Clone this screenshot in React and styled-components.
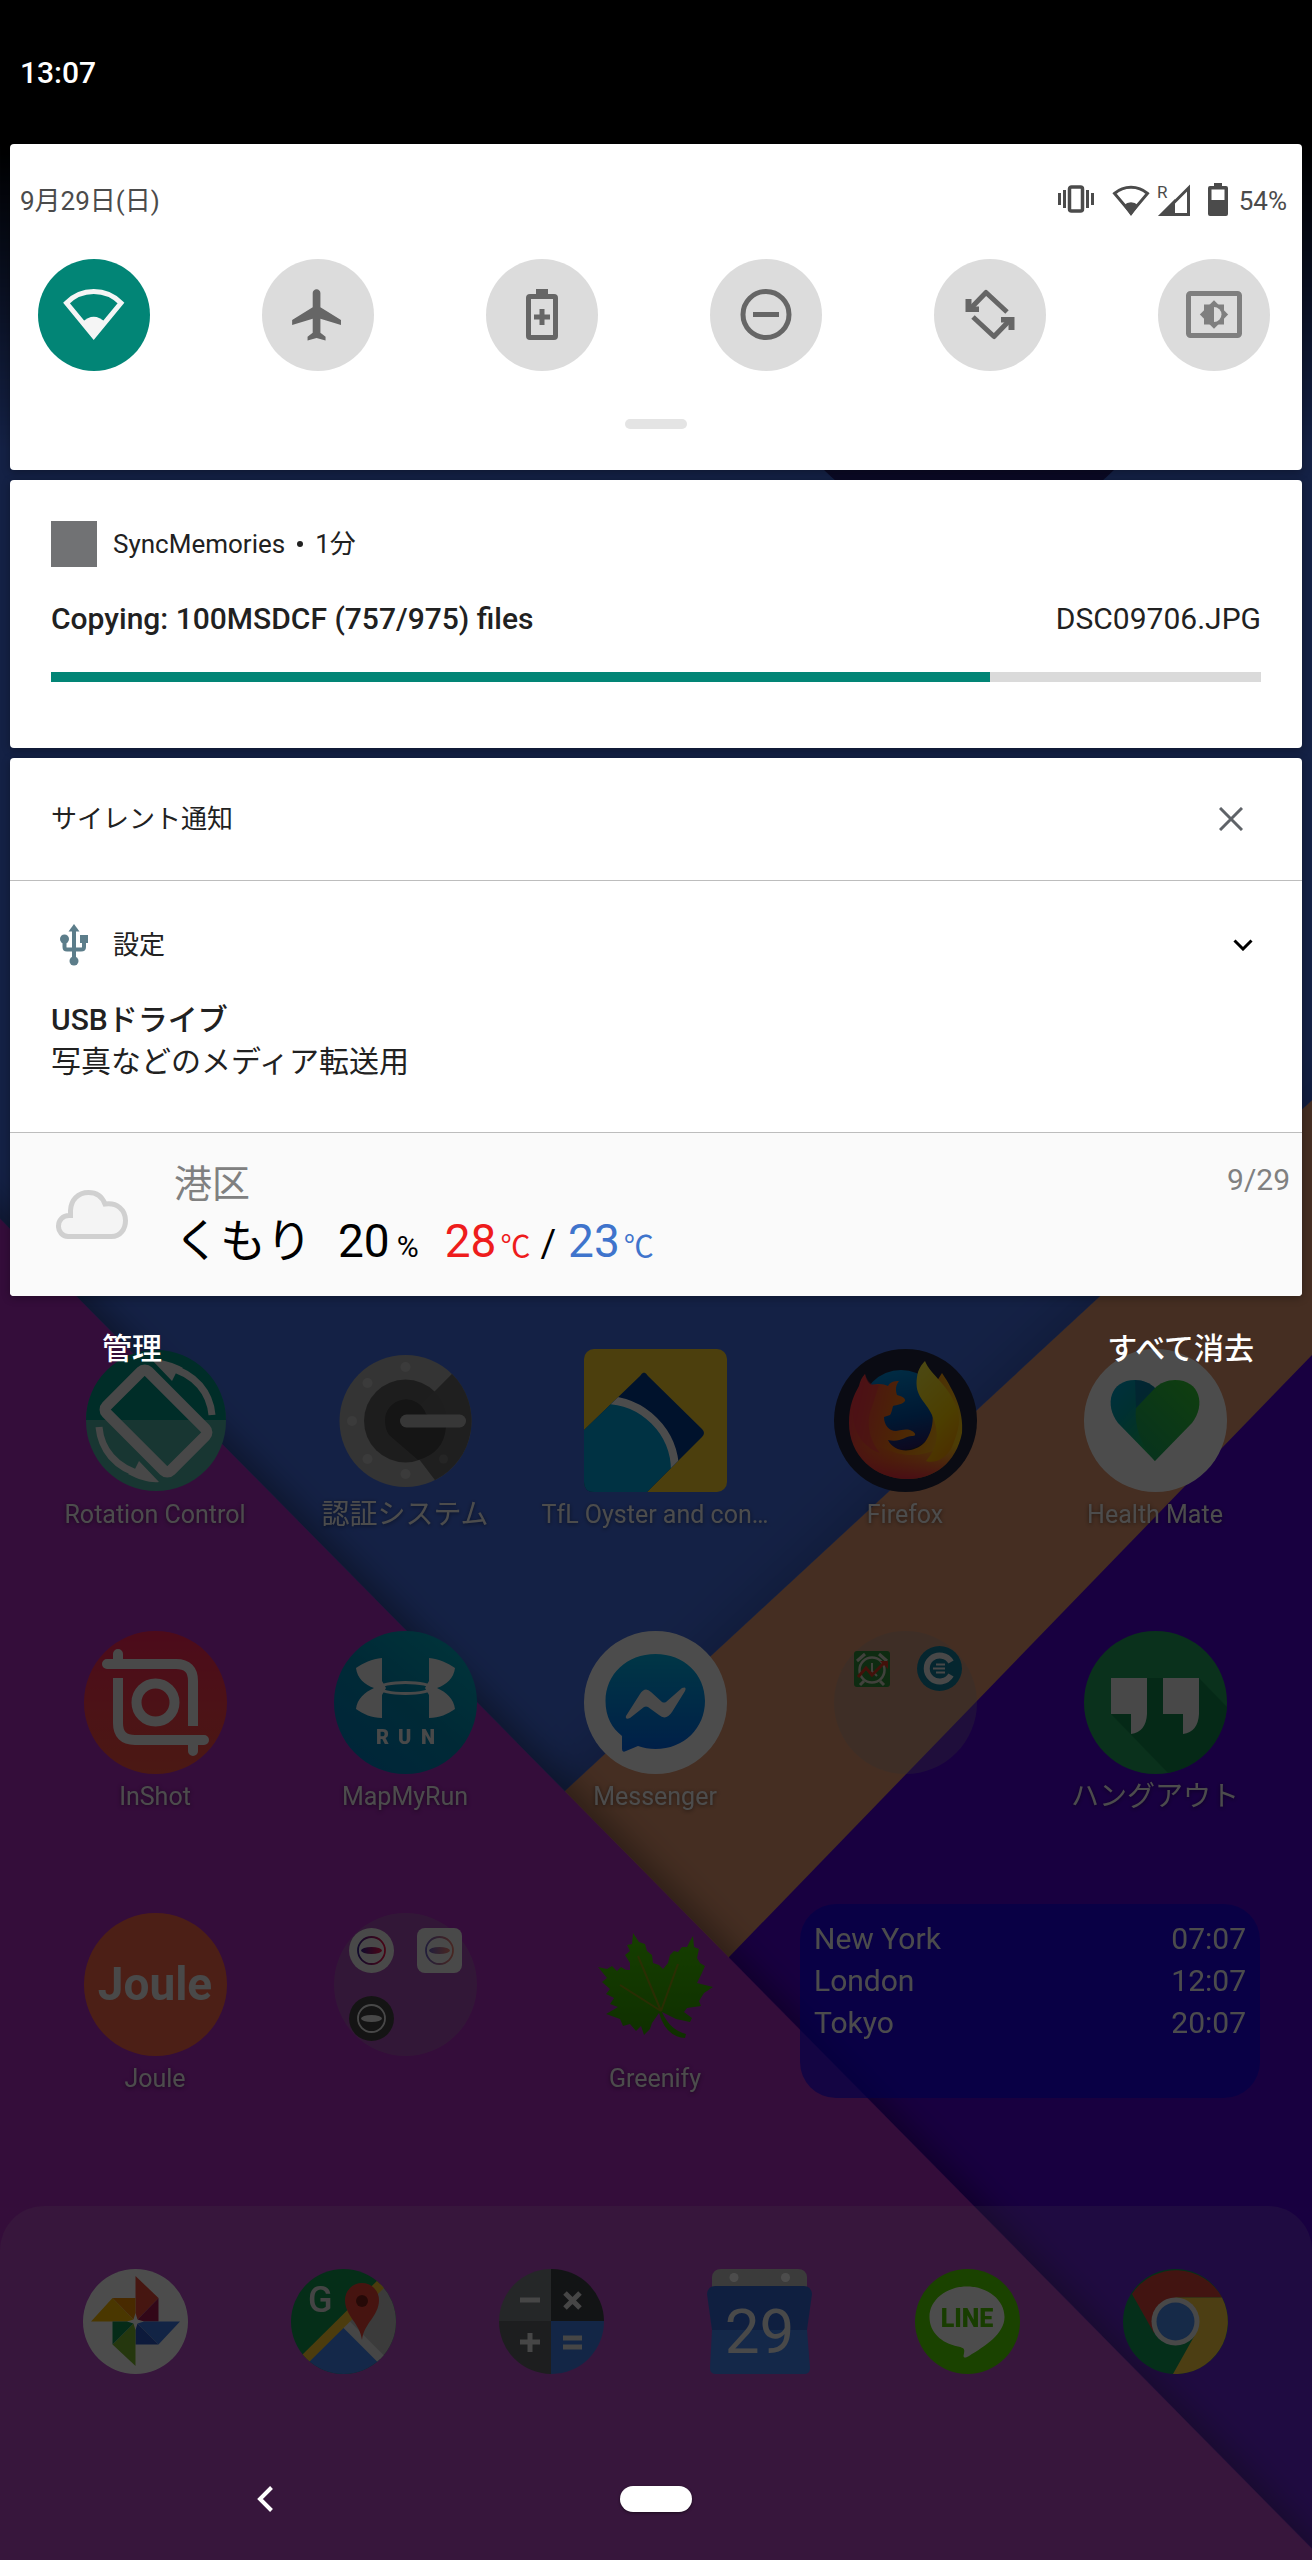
import React from "react";
import styled, { createGlobalStyle } from "styled-components";

const GlobalStyle = createGlobalStyle`
  *, *::before, *::after { box-sizing: border-box; }
  html, body { margin: 0; background: #000; }
  body, button, progress {
    font-family: Roboto, "Noto Sans CJK JP", sans-serif;
  }
  button { margin: 0; padding: 0; border: 0; background: none; cursor: pointer; }
  svg { display: block; flex: none; }
`;

/* ---------- layers ---------- */

const Screen = styled.div`
  display: grid;
  grid-template-columns: minmax(0, 1fr);
  grid-template-rows: 1fr;
  min-height: 100vh;
`;

const Home = styled.main`
  grid-area: 1 / 1;
  position: relative;
  display: flex;
  flex-direction: column;
  justify-content: flex-end;
  overflow: hidden;
  filter: brightness(0.3);
`;

const WallpaperSvg = styled.svg`
  position: absolute;
  inset: 0;
  width: 100%;
  height: 100%;
`;

const Shade = styled.section`
  grid-area: 1 / 1;
  align-self: start;
  position: relative;
  display: flex;
  flex-direction: column;
`;

const NavBar = styled.nav`
  grid-area: 1 / 1;
  align-self: end;
  position: relative;
  display: grid;
  grid-template-columns: 1fr 72px 1fr;
  align-items: center;
  height: 122px;
`;

/* ---------- shade ---------- */

const StatusBar = styled.header`
  display: flex;
  align-items: center;
  height: 144px;
  padding: 0 20px;
  background: #000;
  color: #fff;
  font-size: 30px;
  font-weight: 500;
`;

const Stack = styled.div`
  display: flex;
  flex-direction: column;
  gap: 10px;
  padding: 0 10px;
`;

const Card = styled.article`
  overflow: hidden;
  border-radius: 4px;
  background: #fff;
  color: #212121;
  box-shadow: 0 2px 8px rgba(0, 0, 0, 0.3);
`;

const QuickSettings = styled(Card)`
  display: flex;
  flex-direction: column;
  padding: 39px 0 41px;
`;

const InfoRow = styled.div`
  display: flex;
  align-items: center;
  justify-content: space-between;
  height: 36px;
  padding: 0 15px 0 10px;
  color: #4b4b4b;
  font-size: 26px;
  line-height: 36px;
`;

const Cluster = styled.div`
  display: flex;
  align-items: center;
  gap: ${(p) => p.$gap}px;
`;

const Tiles = styled.div`
  display: flex;
  justify-content: space-between;
  margin-top: 40px;
  padding: 0 32px 0 28px;
`;

const Tile = styled.button`
  width: 112px;
  height: 112px;
  border-radius: 50%;
  background: ${(p) => (p.$on ? "#028576" : "#dcdcdc")};
  color: ${(p) => (p.$on ? "#f5f5f5" : p.$dim ? "#7f7f7f" : "#666")};
`;

const Handle = styled.div`
  align-self: center;
  width: 62px;
  height: 10px;
  margin-top: 48px;
  border-radius: 5px;
  background: #e4e4e4;
`;

const SyncCard = styled(Card)`
  padding: 41px 41px 66px;
`;

const NoteHeader = styled.div`
  display: flex;
  align-items: center;
  height: 46px;
  font-size: 26px;
  line-height: 36px;
`;

const AppMark = styled.div`
  display: flex;
  align-items: center;
  justify-content: center;
  width: 46px;
  height: 46px;
  margin-right: 16px;
  background: ${(p) => p.$fill || "transparent"};
`;

const Dot = styled.span`
  width: 6px;
  height: 6px;
  margin: 0 12px;
  border-radius: 50%;
  background: #212121;
`;

const TitleRow = styled.div`
  display: flex;
  justify-content: space-between;
  margin-top: 34px;
  font-size: 30px;
  line-height: 36px;
`;

const Title = styled.span`
  font-weight: 500;
`;

const Progress = styled.progress`
  display: block;
  appearance: none;
  width: 100%;
  height: 10px;
  margin-top: 35px;
  border: 0;
  background: #dadada;

  &::-webkit-progress-bar { background: #dadada; }
  &::-webkit-progress-value { background: #028576; }
  &::-moz-progress-bar { background: #028576; }
`;

const SilentHeader = styled.header`
  display: flex;
  align-items: center;
  justify-content: space-between;
  height: 122px;
  padding: 0 47px 0 41px;
  font-size: 26px;
`;

const Heading = styled.h2`
  margin: 0;
  font-size: 26px;
  font-weight: 400;
  line-height: 36px;
`;

const IconButton = styled.button`
  display: flex;
  align-items: center;
  justify-content: center;
  width: 48px;
  height: 48px;
  margin-left: auto;
`;

const Note = styled.section`
  padding: 41px 35px 49px 41px;
  border-top: 1px solid #bdbdbd;
`;

const NoteBody = styled.div`
  margin-top: 31px;
  font-size: 30px;
  line-height: 42px;
`;

const Weather = styled.section`
  display: flex;
  align-items: center;
  height: 164px;
  padding: 0 12px 0 46px;
  border-top: 1px solid #bdbdbd;
  background: #fafafa;
`;

const WeatherText = styled.div`
  flex: 1;
  margin-left: 46px;
  padding-top: 4px;
  color: #000;
`;

const Place = styled.div`
  color: #808080;
  font-size: 38px;
  line-height: 54px;
`;

const Forecast = styled.div`
  display: flex;
  align-items: baseline;
  font-size: 46px;
  line-height: 60px;
`;

const Reading = styled.span`
  margin-left: ${(p) => p.$gap}px;
  color: ${(p) => p.$color || "#000"};
`;

const Unit = styled.span`
  margin-left: ${(p) => p.$gap}px;
  color: ${(p) => p.$color || "#000"};
  font-size: 30px;
`;

const Slash = styled.span`
  margin-left: 10px;
  font-size: 38px;
`;

const WeatherDate = styled.time`
  align-self: flex-start;
  margin-top: 27px;
  color: #808080;
  font-size: 30px;
  line-height: 40px;
`;

const Actions = styled.div`
  display: flex;
  justify-content: space-between;
  margin-top: 33px;
  padding: 0 58px 0 102px;
`;

const TextButton = styled.button`
  color: #fff;
  font-size: 30px;
  font-weight: 500;
  line-height: 40px;
`;

/* ---------- home ---------- */

const Apps = styled.div`
  position: relative;
  display: grid;
  grid-template-columns: repeat(5, minmax(0, 1fr));
  grid-auto-rows: 282px;
  margin-bottom: 11px;
  padding: 0 32px 0 30px;
`;

const AppButton = styled.button`
  display: flex;
  flex-direction: column;
  align-items: center;
  color: #fff;
`;

const AppLabel = styled.span`
  margin-top: 6px;
  font-size: ${(p) => (p.$cjk ? 28 : 25)}px;
  line-height: 34px;
  white-space: nowrap;
  text-shadow: 0 1px 4px rgba(0, 0, 0, 0.5);
`;

const ClockWidget = styled.div`
  grid-column: span 2;
  height: 194px;
  margin: -9px 20px 0;
  padding: 14px;
  border-radius: 36px;
  background: rgba(0, 0, 240, 0.62);
  color: #fff;
  font-size: 30px;
  line-height: 42px;
`;

const ClockRow = styled.div`
  display: flex;
  justify-content: space-between;
`;

const Dock = styled.div`
  position: relative;
  display: flex;
  justify-content: space-between;
  height: 354px;
  padding: 63px 84px 0 83px;
  border-radius: 44px 44px 0 0;
  background: rgba(233, 233, 233, 0.16);
`;

const DockButton = styled.button`
  width: 105px;
  height: 105px;
`;

const BackButton = styled.button`
  display: flex;
  align-items: center;
  justify-content: center;
  width: 96px;
  height: 96px;
  margin-left: 217px;
`;

const HomeButton = styled.button`
  height: 26px;
  border-radius: 13px;
  background: #fff;
  box-shadow: 0 1px 3px rgba(0, 0, 0, 0.5);
`;

/* ---------- wallpaper ---------- */

function Wallpaper() {
  return (
    <WallpaperSvg viewBox="0 0 1312 2560" preserveAspectRatio="xMidYMid slice" aria-hidden="true">
      <defs>
        <filter id="sheet" x="-10%" y="-10%" width="120%" height="120%">
          <feDropShadow dx="8" dy="-4" stdDeviation="16" floodColor="#000" floodOpacity="0.38" />
        </filter>
        <filter id="band" x="-10%" y="-10%" width="120%" height="120%">
          <feDropShadow dx="-10" dy="-6" stdDeviation="26" floodColor="#000" floodOpacity="0.18" />
        </filter>
        <linearGradient id="topFade" x1="0" y1="0" x2="0" y2="1">
          <stop offset="0.32" stopColor="#000" />
          <stop offset="1" stopColor="#000" stopOpacity="0" />
        </linearGradient>
      </defs>
      <rect width="1312" height="2560" fill="#436ee6" />
      <circle cx="969" cy="325" r="205" fill="#25227c" />
      <polygon points="1400,1019 565,1791 640,2100 1400,2100" fill="#e69971" filter="url(#band)" />
      <polygon points="1400,1264 729,1957 729,2700 1400,2700" fill="#5000d5" />
      <polygon points="-60,1158 1400,2638 1400,2800 -60,2800" fill="#ad2bc1" filter="url(#sheet)" />
      <rect width="1312" height="450" fill="url(#topFade)" />
    </WallpaperSvg>
  );
}

/* ---------- quick setting icons ---------- */

const TileSvg = ({ children }) => (
  <svg width="112" height="112" viewBox="0 0 112 112" fill="none" stroke="currentColor" strokeWidth="5" aria-hidden="true">
    {children}
  </svg>
);

const RotateHalf = () => (
  <>
    <path d="M73 53 52 33.500 37 49" strokeLinejoin="round" />
    <path d="M31.500 40h6v7.500h7.500v5.500H31.500z" fill="currentColor" stroke="none" />
  </>
);

const tiles = [
  {
    name: "Wi-Fi",
    on: true,
    art: (
      <>
        <path d="M28.500 44A38 38 0 0 1 83 44L55.700 77Z" />
        <path d="M55.700 80 44 63.500Q55.700 52 67.500 63.500Z" fill="currentColor" stroke="none" />
      </>
    ),
  },
  {
    name: "機内モード",
    art: (
      <path
        transform="translate(25 25) scale(2.570)"
        d="M21 16v-2l-8-5V3.500c0-.83-.67-1.500-1.500-1.500S10 2.670 10 3.500V9l-8 5v2l8-2.500V19l-2 1.500V22l3.500-1 3.500 1v-1.500L13 19v-5.500l8 2.500z"
        fill="currentColor"
        stroke="none"
      />
    ),
  },
  {
    name: "バッテリー セーバー",
    art: (
      <>
        <rect x="42.500" y="37.500" width="27" height="41" rx="1.500" />
        <path d="M50 30h12v6H50z" fill="currentColor" stroke="none" />
        <path d="M56 50v16M48 58h16" />
      </>
    ),
  },
  {
    name: "サイレント モード",
    art: (
      <>
        <circle cx="56" cy="55.500" r="23" />
        <path d="M43 55.500h26" />
      </>
    ),
  },
  {
    name: "自動回転",
    art: (
      <>
        <RotateHalf />
        <g transform="rotate(180 56 55.500)">
          <RotateHalf />
        </g>
      </>
    ),
  },
  {
    name: "アンビエント表示",
    dim: true,
    art: (
      <>
        <rect x="30.500" y="34.500" width="51" height="42" rx="2" />
        <g fill="currentColor" stroke="none">
          <rect x="46" y="45.500" width="20" height="20" />
          <rect x="46" y="45.500" width="20" height="20" transform="rotate(45 56 55.500)" />
        </g>
        <path d="M56 48a7.500 7.500 0 0 1 0 15z" fill="#dcdcdc" stroke="none" />
      </>
    ),
  },
];

/* ---------- status icons ---------- */

const VibrateIcon = () => (
  <svg width="36" height="32" viewBox="0 0 36 32" fill="none" stroke="#4b4b4b" aria-label="バイブ">
    <rect x="11.500" y="2" width="13" height="24" rx="2" strokeWidth="3.500" />
    <path d="M1.500 8v12M6.500 5v18M29.500 5v18M34.500 8v12" strokeWidth="3" />
  </svg>
);

const WifiIcon = () => (
  <svg width="38" height="34" viewBox="0 0 38 34" aria-label="Wi-Fi">
    <path d="M2.500 9.500A25 25 0 0 1 35.500 9.500L19 29Z" fill="none" stroke="#4b4b4b" strokeWidth="3" />
    <path d="M19 32 11.500 21.500Q19 15 26.500 21.500Z" fill="#4b4b4b" />
  </svg>
);

const SignalIcon = () => (
  <svg width="33" height="36" viewBox="0 0 33 36" aria-label="モバイル">
    <text x="0" y="15" fontSize="17" fill="#4b4b4b">R</text>
    <path d="M5 31.500 31.500 5V31.500Z" fill="none" stroke="#4b4b4b" strokeWidth="3" />
    <path d="M1 33 18 16V33Z" fill="#4b4b4b" />
  </svg>
);

const BatteryIcon = () => (
  <svg width="20" height="36" viewBox="0 0 20 36" aria-label="電池">
    <path d="M6 0h8v3h4a2 2 0 0 1 2 2v26a2 2 0 0 1-2 2H2a2 2 0 0 1-2-2V5a2 2 0 0 1 2-2h4z" fill="#4b4b4b" />
    <rect x="3.500" y="6.500" width="13" height="10.500" fill="#fff" />
  </svg>
);

const UsbIcon = () => (
  <svg width="28" height="42" viewBox="0 0 28 42" fill="#5c7d8a" aria-hidden="true">
    <path d="M14 0l5.500 7.500H8.500z" />
    <circle cx="4.500" cy="15" r="4.500" />
    <rect x="20" y="11" width="8" height="8" />
    <circle cx="14" cy="37" r="4.500" />
    <path d="M14 6v30M4.500 16v7q0 2.500 2.500 2.500h14q3 0 3-2.500v-6" fill="none" stroke="#5c7d8a" strokeWidth="4" />
  </svg>
);

const CloudIcon = () => (
  <svg width="72" height="49" viewBox="0 0 72 49" aria-hidden="true">
    <path
      d="M12 46.500a10 10 0 0 1-9.500-10.500c0-6 4.500-10.500 10.500-10.500h1.500v-5C15 10 22 2.500 32.500 2.500c8.500 0 14 5 16.500 11.500 12-2 20.500 6 20.500 16.500 0 8.500-5 16-14 16z"
      fill="#f4f4f4"
      stroke="#d0d0d0"
      strokeWidth="5"
    />
  </svg>
);

/* ---------- launcher icons ---------- */

const AppSvg = ({ children }) => (
  <svg width="143" height="143" viewBox="0 0 143 143" aria-hidden="true">
    {children}
  </svg>
);

const ArrowArc = () => (
  <>
    <path d="M84 18C112 25 126 44 128 66" fill="none" stroke="#f0f0f0" strokeWidth="7" />
    <path d="M68 11C76 10 88 13 99 19L92 24 88 32Z" fill="#f0f0f0" />
  </>
);

const RotationControl = () => (
  <AppSvg>
    <circle cx="72" cy="72" r="70" fill="#4fb3a5" />
    <path d="M2 71a70 70 0 0 1 140 0z" fill="#009684" />
    <ArrowArc />
    <g transform="rotate(180 71.500 72)">
      <ArrowArc />
    </g>
    <g transform="translate(72 72) rotate(45)">
      <rect x="-45.500" y="-29.500" width="91" height="59" rx="5" fill="none" stroke="#f0f0f0" strokeWidth="11" />
    </g>
  </AppSvg>
);

const Authenticator = () => (
  <AppSvg>
    <circle cx="71.500" cy="72" r="66" fill="#adadad" />
    <path d="M118 25A66 66 0 0 1 101 131L71.500 92V72Z" fill="#686868" />
    <circle cx="71.500" cy="72" r="41.500" fill="#626262" />
    <path d="M118 25 101 42 71 72V92L101 131A66 66 0 0 0 137 72 66 66 0 0 0 118 25Z" fill="#686868" opacity=".55" />
    <path d="M51 72a21 21 0 0 1 41-7L112 78Q110 104 84 111L55 86Q51 80 51 72Z" fill="#454545" />
    <g fill="#c4c4c4">
      <circle cx="71.500" cy="18" r="5" />
      <circle cx="33.500" cy="34" r="5" />
      <circle cx="18" cy="72" r="5" />
      <circle cx="33.500" cy="110" r="5" />
      <circle cx="71.500" cy="125" r="5" />
    </g>
    <circle cx="109.500" cy="110" r="4.500" fill="#7c7c7c" />
    <rect x="66" y="65.500" width="66" height="13" rx="6.500" fill="#b8b8b8" />
  </AppSvg>
);

const Oyster = () => (
  <AppSvg>
    <defs>
      <clipPath id="oysterCard">
        <path d="M56 27Q60 20 64 27L118 80Q122 84 118 88L63 143H10Q0 143 0 133V81Z" />
      </clipPath>
    </defs>
    <rect width="143" height="143" rx="10" fill="#fdd22b" />
    <g clipPath="url(#oysterCard)">
      <rect width="143" height="143" fill="#003c93" />
      <circle cx="20" cy="122" r="71" fill="#00a7df" stroke="#fff" strokeWidth="8" />
    </g>
  </AppSvg>
);

const Firefox = () => (
  <AppSvg>
    <defs>
      <linearGradient id="ffGlobe" x1=".4" y1="0" x2=".6" y2="1">
        <stop offset="0" stopColor="#0090e0" />
        <stop offset=".6" stopColor="#0050a8" />
        <stop offset="1" stopColor="#2b1a66" />
      </linearGradient>
      <linearGradient id="ffBody" x1="0" y1=".3" x2="1" y2=".5">
        <stop offset="0" stopColor="#ff3647" />
        <stop offset=".45" stopColor="#ff7a12" />
        <stop offset="1" stopColor="#ffcc10" />
      </linearGradient>
      <linearGradient id="ffFoot" x1="0" y1=".4" x2="0" y2="1">
        <stop offset="0" stopColor="#ff2a50" stopOpacity="0" />
        <stop offset="1" stopColor="#f01550" stopOpacity=".8" />
      </linearGradient>
      <linearGradient id="ffTail" x1=".3" y1="0" x2=".7" y2="1">
        <stop offset="0" stopColor="#fff03a" />
        <stop offset=".6" stopColor="#ffcf00" />
        <stop offset="1" stopColor="#ff9a00" />
      </linearGradient>
    </defs>
    <circle cx="71.500" cy="71.500" r="71.500" fill="#21253e" />
    <circle cx="67" cy="61" r="40" fill="url(#ffGlobe)" />
    <path
      d="M31 25C32 31 35 35 38 36C45 34 50 35 54 37C56 33 60 32 65 32C62 36 61 40 63 46C67 47 72 49 71 52C69 55 63 56 59 57C58 61 57 65 56 66L50 68C50 76 55 82 62 82C68 81 73 79 78 82C82 84 82 87 79 87C72 86 67 94 54 91C60 104 80 105 91 93C102 78 100 60 93 48L108 24C120 42 130 62 128 84C122 114 100 130 74 130C40 130 15 106 15 74C15 56 20 46 25 37C26 32 28 28 31 25Z"
      fill="url(#ffBody)"
    />
    <path
      d="M15 74C15 106 40 130 74 130C100 130 122 114 128 84C110 100 85 112 60 103C40 96 22 90 15 74Z"
      fill="url(#ffFoot)"
    />
    <path d="M91 12C96 26 116 36 124 62C127 75 123 85 118 98C112 110 100 115 92 112C104 98 106 84 98 66C92 52 80 48 83 28C84 20 88 15 91 12Z" fill="url(#ffTail)" />
    <path d="M31 25C34 34 38 36 45 36L38 58C32 70 34 90 46 104C28 98 16 80 20 56C21 42 28 32 31 25Z" fill="#ff2f4e" opacity=".45" />
  </AppSvg>
);

const HealthMate = () => (
  <AppSvg>
    <defs>
      <linearGradient id="heartLeft" x1="0" y1="0" x2=".6" y2="1">
        <stop offset="0" stopColor="#009fd0" />
        <stop offset=".45" stopColor="#00a0a4" />
        <stop offset="1" stopColor="#18b858" />
      </linearGradient>
      <linearGradient id="heartRight" x1="1" y1="0" x2=".2" y2="1">
        <stop offset="0" stopColor="#36d030" />
        <stop offset="1" stopColor="#18a860" />
      </linearGradient>
    </defs>
    <circle cx="71.500" cy="71.500" r="71.500" fill="#fff" />
    <path d="M71 112 34 74C20 56 26 31 51 31C59 31 66 34 71 39Z" fill="url(#heartLeft)" />
    <path d="M71 112 108 74C122 56 116 31 91 31C83 31 76 34 71 39L52 59C50 75 56 96 71 112Z" fill="url(#heartRight)" />
    <path d="M51 31C59 31 66 34 71 39L52 59Z" fill="#0a5f9c" opacity=".5" />
  </AppSvg>
);

const InShot = () => (
  <AppSvg>
    <defs>
      <linearGradient id="inshot" x1="0" y1="0" x2="0" y2="1">
        <stop offset="0" stopColor="#ff2358" />
        <stop offset="1" stopColor="#fa5340" />
      </linearGradient>
    </defs>
    <circle cx="71.500" cy="71.500" r="71.500" fill="url(#inshot)" />
    <g fill="none" stroke="#f4f4f4" strokeWidth="10">
      <path d="M23 33H92Q109 33 109 50V95M34 47V92Q34 109 51 109H120" />
      <path d="M34 33V23M109 109V120M23 33h4M116 109h4" strokeLinecap="round" />
      <circle cx="71.500" cy="71.500" r="19" />
    </g>
  </AppSvg>
);

const ArmourSide = () => (
  <path d="M48 27C38 28 29 32 22 37C23 47 31 54 40 57C31 61 23 68 22 78C29 83 38 87 48 87V64L52 57 48 50Z" />
);

const MapMyRun = () => (
  <AppSvg>
    <defs>
      <linearGradient id="mmr" x1=".1" y1="1" x2=".9" y2="0">
        <stop offset="0" stopColor="#007cc0" />
        <stop offset=".5" stopColor="#008ab4" />
        <stop offset="1" stopColor="#00b0c4" />
      </linearGradient>
    </defs>
    <circle cx="71.500" cy="71.500" r="71.500" fill="url(#mmr)" />
    <g fill="#f4f4f4">
      <ArmourSide />
      <g transform="translate(143 0) scale(-1 1)">
        <ArmourSide />
      </g>
      <ellipse cx="71.500" cy="57" rx="26" ry="5.500" fill="none" stroke="#f4f4f4" strokeWidth="3" />
      <text x="42 64 87" y="113" fontSize="20" fontWeight="900">RUN</text>
    </g>
  </AppSvg>
);

const Messenger = () => (
  <AppSvg>
    <defs>
      <linearGradient id="msgr" x1="0" y1="0" x2="0" y2="1">
        <stop offset="0" stopColor="#00b4e8" />
        <stop offset="1" stopColor="#0068f0" />
      </linearGradient>
    </defs>
    <circle cx="71.500" cy="71.500" r="71.500" fill="#fff" />
    <path d="M71.500 23C43 23 21.500 43 21.500 70C21.500 86 28 97 38 105V118Q38 122 42 120L54 115Q62 118 71.500 118C100 118 121 97 121 70C121 43 100 23 71.500 23Z" fill="url(#msgr)" />
    <path d="M42 85 56 63Q61 55 67 61L78 71Q80 72 82 71L98 57Q103 55 101 60L88 81Q82 90 75 84L64 76Q62 75 60 76L46 87Q41 89 42 85Z" fill="#f4f4f4" />
  </AppSvg>
);

const FolderOne = () => (
  <AppSvg>
    <circle cx="71.500" cy="71.500" r="71.500" fill="rgba(160,160,160,.3)" />
    <rect x="20" y="20" width="36" height="36" rx="3" fill="#2f8f38" />
    <circle cx="38" cy="39" r="12.500" fill="none" stroke="#d8d8c8" strokeWidth="2.500" />
    <path d="M23 30l8-7M53 30l-8-7M30 50l-4 4M46 50l4 4" stroke="#d8d8c8" strokeWidth="3" />
    <path d="M38 32v8l5 5" fill="none" stroke="#d8d8c8" strokeWidth="2" />
    <path d="M24 46l8-9 6 7 13-13" fill="none" stroke="#e03a20" strokeWidth="3" />
    <path d="M46 30h8v8z" fill="#e03a20" />
    <circle cx="105.500" cy="37.500" r="22.500" fill="#127f9c" />
    <path d="M117 31a13 13 0 1 0 0 13" fill="none" stroke="#f0f0f0" strokeWidth="6" />
    <path d="M102 33.500h9M99 37.500h12M102 41.500h9" stroke="#f0f0f0" strokeWidth="2" />
  </AppSvg>
);

const Quote = () => <path d="M27 47H63V83Q62 101 47 103V83H27Z" />;

const Hangouts = () => (
  <AppSvg>
    <circle cx="71.500" cy="71.500" r="71.500" fill="#20a25c" />
    <path d="M27 83 84 142A71.500 71.500 0 0 0 143 76L115 47 63 47Z" fill="#0a7a44" opacity=".6" />
    <g fill="#f0f0f0">
      <Quote />
      <g transform="translate(52 0)">
        <Quote />
      </g>
    </g>
  </AppSvg>
);

const Joule = () => (
  <AppSvg>
    <circle cx="71.500" cy="71.500" r="71.500" fill="#ff6648" />
    <text x="71" y="87" textAnchor="middle" fontSize="46" fontWeight="700" fill="#f2f2f2">Joule</text>
  </AppSvg>
);

const Eye = ({ x, y, ring, fill }) => (
  <g transform={`translate(${x} ${y})`}>
    <circle r="13.500" fill="none" stroke={ring} strokeWidth="1.800" />
    <ellipse rx="10.500" ry="3.500" fill={fill} />
  </g>
);

const FolderTwo = () => (
  <AppSvg>
    <defs>
      <linearGradient id="eyeVivid">
        <stop offset="0" stopColor="#3a2090" />
        <stop offset="1" stopColor="#f01048" />
      </linearGradient>
      <linearGradient id="eyePale">
        <stop offset="0" stopColor="#7060c0" />
        <stop offset="1" stopColor="#f08070" />
      </linearGradient>
    </defs>
    <circle cx="71.500" cy="71.500" r="71.500" fill="rgba(160,160,160,.3)" />
    <circle cx="37.500" cy="37.500" r="22.500" fill="#f4f4f4" />
    <Eye x="37.500" y="37.500" ring="url(#eyeVivid)" fill="url(#eyeVivid)" />
    <rect x="83" y="15" width="45" height="45" rx="8" fill="#f4f4f4" />
    <Eye x="105.500" y="37.500" ring="url(#eyePale)" fill="url(#eyePale)" />
    <circle cx="37.500" cy="105.500" r="22.500" fill="#444" />
    <Eye x="37.500" y="105.500" ring="#f0f0f0" fill="#f0f0f0" />
  </AppSvg>
);

const Greenify = () => (
  <AppSvg>
    <defs>
      <linearGradient id="leaf" x1="0" y1="0" x2="0" y2="1">
        <stop offset="0" stopColor="#48d000" />
        <stop offset="1" stopColor="#309c00" />
      </linearGradient>
    </defs>
    <path
      d="M49 20 55 29 61 31 63 38 68 42 69 50 75 52 79 56 84 50 86 42 90 38 94 39 98 34 103 34 106 28 109 23 110 34 115 36 113 45 116 50 121 53 117 62 113 70 129 74 120 80 115 88 117 93 103 95 100 99 108 105 106 109 92 106 78 99Q86 117 102 121L101 125Q82 124 75 100L68 110 66 116 60 122 57 113 52 118 46 111 39 113 36 106 22 101 34 94 26 91 30 85 22 81 26 76 18 69 23 65 14 54 23 56 28 53 33 58 37 54 42 57 46 57 46 50 41 42 46 38 43 32 48 31Z"
      fill="url(#leaf)"
    />
    <path d="M77 98 54 43M77 98 36 72M77 98 94 51" stroke="#b08a10" strokeWidth="2" opacity=".7" fill="none" />
  </AppSvg>
);

/* ---------- dock icons ---------- */

const DockSvg = ({ children }) => (
  <svg width="105" height="105" viewBox="0 0 105 105" aria-hidden="true">
    {children}
  </svg>
);

const Photos = () => (
  <DockSvg>
    <circle cx="52.500" cy="52.500" r="52.500" fill="#fff" />
    <path d="M52.500 7 75.500 29 52.500 52.500Z" fill="#ea4a38" />
    <path d="M75.500 29V52.500H52.500Z" fill="#a81850" />
    <path d="M8 52.500 29.500 29 52.500 52.500Z" fill="#f8b800" />
    <path d="M29.500 29H52.500V52.500Z" fill="#f08c00" />
    <path d="M97 52.500 75.500 75.500 52.500 52.500Z" fill="#3b78e7" />
    <path d="M75.500 75.500H52.500V52.500Z" fill="#2a56c6" />
    <path d="M52.500 97 29.500 75.500 52.500 52.500Z" fill="#7cb82f" />
    <path d="M29.500 75.500V52.500H52.500Z" fill="#0f9050" />
    <path d="M52.500 44 54.500 50.500 61 52.500 54.500 54.500 52.500 61 50.500 54.500 44 52.500 50.500 50.500Z" fill="#fff" />
  </DockSvg>
);

const Maps = () => (
  <DockSvg>
    <defs>
      <clipPath id="mapsDisc">
        <circle cx="52.500" cy="52.500" r="52.500" />
      </clipPath>
    </defs>
    <g clipPath="url(#mapsDisc)">
      <rect width="105" height="105" fill="#0f9950" />
      <path d="M105 0 52 53 105 105Z" fill="#c4c4c4" />
      <path d="M52 55 0 107H105Z" fill="#4285f4" />
      <path d="M52 52 96 96" stroke="#e8e8e8" strokeWidth="9" />
      <path d="M8 96 96 9" stroke="#fdc92e" strokeWidth="10" />
    </g>
    <text x="17" y="43" fontSize="36" fontWeight="500" fill="#e4e4e4">G</text>
    <path d="M71 71C69 54 54 47 54 31A17 17 0 0 1 88 31C88 47 73 54 71 71Z" fill="#ea4335" />
    <circle cx="71" cy="32" r="6" fill="#7c1f18" />
  </DockSvg>
);

const Calculator = () => (
  <DockSvg>
    <path d="M52 52V0A52.500 52.500 0 0 0 0 52Z" fill="#7c8286" />
    <path d="M52 52V0A52.500 52.500 0 0 1 105 52Z" fill="#3c4246" />
    <path d="M52 52V105A52.500 52.500 0 0 1 0 52Z" fill="#5f6466" />
    <path d="M52 52V105A52.500 52.500 0 0 0 105 52Z" fill="#4080ea" />
    <path d="M21 31H41M66 24 81 39M81 24 66 39M21 73H41M31 64V83M64 69H83M64 78H83" stroke="#e8e8e8" strokeWidth="5" />
  </DockSvg>
);

const Calendar = () => (
  <DockSvg>
    <path d="M5 18V8Q6 0 14 0H91Q99 0 100 8V18Z" fill="#c4c4c4" />
    <circle cx="27" cy="8.500" r="4.500" fill="#fff" />
    <circle cx="78.500" cy="8.500" r="4.500" fill="#fff" />
    <path d="M8 17H97Q104 17 105 25L100 61H5L0 25Q1 17 8 17Z" fill="#3367d6" />
    <path d="M5 61H100L103 99Q103 105 97 105H9Q3 105 3 99Z" fill="#4285f4" />
    <text x="52.500" y="84" textAnchor="middle" fontSize="62" fontWeight="400" fill="#f4f4f4">29</text>
  </DockSvg>
);

const Line = () => (
  <DockSvg>
    <circle cx="52.500" cy="52.500" r="52.500" fill="#58dc00" />
    <path d="M52 17.500C31 17.500 14.500 31 14.500 48C14.500 63 26 74 43 77.500C50 79 50 80 48.500 87C49 90 52 88 54 87C70 77 89.500 65 89.500 48C89.500 31 73 17.500 52 17.500Z" fill="#fff" />
    <text x="52" y="58" textAnchor="middle" fontSize="25" fontWeight="900" fill="#50cc00">LINE</text>
  </DockSvg>
);

const Chrome = () => (
  <DockSvg>
    <circle cx="52.500" cy="52.500" r="52.500" fill="#0f9d58" />
    <path d="M9 25A52.500 52.500 0 0 1 99 28.500H52.500L31 64Z" fill="#db4437" />
    <path d="M99 28.500A52.500 52.500 0 0 1 50 105L73 64 52.500 28.500Z" fill="#ffcd40" />
    <circle cx="52.500" cy="52.500" r="24" fill="#f1f1f1" />
    <circle cx="52.500" cy="52.500" r="19" fill="#4a8cf0" />
  </DockSvg>
);

/* ---------- data ---------- */

const apps = [
  { label: "Rotation Control", Icon: RotationControl },
  { label: "認証システム", cjk: true, Icon: Authenticator },
  { label: "TfL Oyster and con…", Icon: Oyster },
  { label: "Firefox", Icon: Firefox },
  { label: "Health Mate", Icon: HealthMate },
  { label: "InShot", Icon: InShot },
  { label: "MapMyRun", Icon: MapMyRun },
  { label: "Messenger", Icon: Messenger },
  { folder: "フォルダ 1", Icon: FolderOne },
  { label: "ハングアウト", cjk: true, Icon: Hangouts },
  { label: "Joule", Icon: Joule },
  { folder: "フォルダ 2", Icon: FolderTwo },
  { label: "Greenify", Icon: Greenify },
];

const clocks = [
  ["New York", "07:07"],
  ["London", "12:07"],
  ["Tokyo", "20:07"],
];

const dock = [
  ["フォト", Photos],
  ["マップ", Maps],
  ["電卓", Calculator],
  ["カレンダー", Calendar],
  ["LINE", Line],
  ["Chrome", Chrome],
];

const WARM = "#ee1c1c";
const COOL = "#3f74cc";

export default function App() {
  return (
    <Screen lang="ja">
      <GlobalStyle />

      <Home>
        <Wallpaper />
        <Apps>
          {apps.map(({ label, folder, cjk, Icon }) => (
            <AppButton key={label || folder} type="button" aria-label={folder}>
              <Icon />
              {label && <AppLabel $cjk={cjk}>{label}</AppLabel>}
            </AppButton>
          ))}
          <ClockWidget>
            {clocks.map(([city, time]) => (
              <ClockRow key={city}>
                <span>{city}</span>
                <time>{time}</time>
              </ClockRow>
            ))}
          </ClockWidget>
        </Apps>
        <Dock>
          {dock.map(([name, Icon]) => (
            <DockButton key={name} type="button" aria-label={name}>
              <Icon />
            </DockButton>
          ))}
        </Dock>
      </Home>

      <Shade>
        <StatusBar>
          <time>13:07</time>
        </StatusBar>
        <Stack>
          <QuickSettings>
            <InfoRow>
              <span>9月29日(日)</span>
              <Cluster $gap={18}>
                <VibrateIcon />
                <Cluster $gap={7}>
                  <WifiIcon />
                  <SignalIcon />
                </Cluster>
                <Cluster $gap={11}>
                  <BatteryIcon />
                  <span>54%</span>
                </Cluster>
              </Cluster>
            </InfoRow>
            <Tiles>
              {tiles.map((t) => (
                <Tile key={t.name} type="button" aria-label={t.name} $on={t.on} $dim={t.dim}>
                  <TileSvg>{t.art}</TileSvg>
                </Tile>
              ))}
            </Tiles>
            <Handle />
          </QuickSettings>

          <SyncCard>
            <NoteHeader>
              <AppMark $fill="#717274" />
              <span>SyncMemories</span>
              <Dot />
              <span>1分</span>
            </NoteHeader>
            <TitleRow>
              <Title id="copying">Copying: 100MSDCF (757/975) files</Title>
              <span>DSC09706.JPG</span>
            </TitleRow>
            <Progress value={757} max={975} aria-labelledby="copying" />
          </SyncCard>

          <Card>
            <SilentHeader>
              <Heading>サイレント通知</Heading>
              <IconButton type="button" aria-label="閉じる">
                <svg width="24" height="24" viewBox="0 0 24 24" stroke="#5f6368" strokeWidth="3" aria-hidden="true">
                  <path d="M1 1 23 23M23 1 1 23" />
                </svg>
              </IconButton>
            </SilentHeader>
            <Note>
              <NoteHeader>
                <AppMark>
                  <UsbIcon />
                </AppMark>
                <span>設定</span>
                <IconButton type="button" aria-label="展開">
                  <svg width="20" height="12" viewBox="0 0 20 12" fill="none" stroke="#000" strokeWidth="3" aria-hidden="true">
                    <path d="M1.500 1.500 10 10 18.500 1.500" />
                  </svg>
                </IconButton>
              </NoteHeader>
              <NoteBody>
                <Title as="div">USBドライブ</Title>
                <div>写真などのメディア転送用</div>
              </NoteBody>
            </Note>
            <Weather>
              <CloudIcon />
              <WeatherText>
                <Place>港区</Place>
                <Forecast>
                  <span>くもり</span>
                  <Reading $gap={26}>20</Reading>
                  <Unit $gap={7}>%</Unit>
                  <Reading $gap={26} $color={WARM}>28</Reading>
                  <Unit $gap={4} $color={WARM}>℃</Unit>
                  <Slash>/</Slash>
                  <Reading $gap={12} $color={COOL}>23</Reading>
                  <Unit $gap={4} $color={COOL}>℃</Unit>
                </Forecast>
              </WeatherText>
              <WeatherDate>9/29</WeatherDate>
            </Weather>
          </Card>
        </Stack>
        <Actions>
          <TextButton type="button">管理</TextButton>
          <TextButton type="button">すべて消去</TextButton>
        </Actions>
      </Shade>

      <NavBar>
        <BackButton type="button" aria-label="戻る">
          <svg width="16" height="26" viewBox="0 0 16 26" fill="none" stroke="#fff" strokeWidth="4" aria-hidden="true">
            <path d="M14.500 1.500 3 13 14.500 24.500" />
          </svg>
        </BackButton>
        <HomeButton type="button" aria-label="ホーム" />
      </NavBar>
    </Screen>
  );
}
